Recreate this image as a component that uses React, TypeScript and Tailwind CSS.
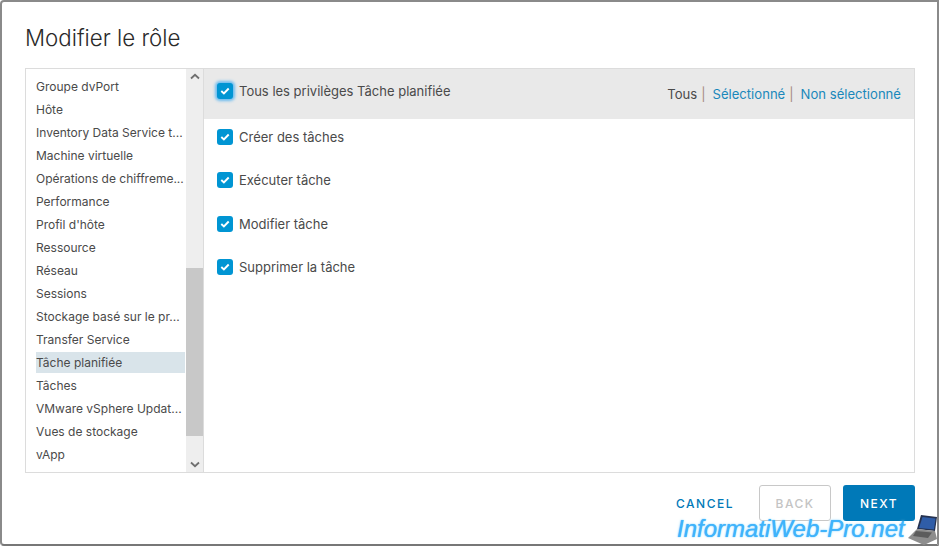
import React from "react";

const items = ["Groupe dvPort","Hôte","Inventory Data Service t...","Machine virtuelle","Opérations de chiffreme...","Performance","Profil d'hôte","Ressource","Réseau","Sessions","Stockage basé sur le pr...","Transfer Service","Tâche planifiée","Tâches","VMware vSphere Updat...","Vues de stockage","vApp"];

function Check({ glow }: { glow?: boolean }) {
  return (
    <span className={"flex h-4 w-4 shrink-0 items-center justify-center rounded-[3px] bg-[#0095d3] " + (glow ? "shadow-[0_0_3px_2px_#6bbcf0]" : "")}>
      <svg width="10" height="8" viewBox="0 0 10 8" fill="none"><path d="M1.3 4 L3.9 6.4 L8.7 1.5" stroke="#fff" strokeWidth="1.9" /></svg>
    </span>
  );
}

const perms = ["Créer des tâches","Exécuter tâche","Modifier tâche","Supprimer la tâche"];

export default function App() {
  return (
    <div className="relative h-[546px] w-[940px] overflow-hidden bg-white font-['Inter','Liberation_Sans',sans-serif] text-[#4a4a4a]">
      <div className="flex h-[546px] w-[939px] flex-col rounded-tl-[4px] rounded-bl-[4px] border-2 border-t-[#8a8a8a] border-r-[#8a8a8a] border-b-[#777] border-l-[#8a8a8a] pt-[22px] pr-[22px] pb-[22px] pl-[23px]">
        <h1 className="h-[44px] text-[22.3px] leading-[28px] font-light text-[#2a2a2a]">Modifier le rôle</h1>
        <div className="flex h-[405px] border border-[#dcdcdc]">
          <div className="flex w-[160px] shrink-0 flex-col pt-[6px] pl-[10px]">
            {items.map((t) => (
              t === "Tâche planifiée"
                ? <div key={t} className="mt-px mr-px mb-px h-[21px] whitespace-nowrap bg-[#d9e4ea] text-[12px] leading-[21px]">{t}</div>
                : <div key={t} className="h-[23px] whitespace-nowrap text-[12px] leading-[23px]">{t}</div>
            ))}
          </div>
          <div className="flex w-[17px] shrink-0 flex-col bg-[#eeeeee]">
            <div className="flex h-[199px] items-start justify-center pt-[4px]">
              <svg width="10" height="7" viewBox="0 0 10 7" fill="none"><path d="M1 5.5 L5 1.8 L9 5.5" stroke="#6f6f6f" strokeWidth="1.8" /></svg>
            </div>
            <div className="h-[168px] bg-[#c8c8c8]" />
            <div className="flex flex-1 items-end justify-center pb-[4px]">
              <svg width="10" height="7" viewBox="0 0 10 7" fill="none"><path d="M1 1.5 L5 5.2 L9 1.5" stroke="#6f6f6f" strokeWidth="1.8" /></svg>
            </div>
          </div>
          <div className="flex min-w-0 flex-1 flex-col border-l border-[#dcdcdc]">
            <div className="flex h-[50px] items-start justify-between bg-[#e9e9e9] pr-[13px] pl-[13px]">
              <div className="flex items-center gap-[6px] pt-[14px]">
                <Check glow />
                <span className="text-[13px] leading-[16px]">Tous les privilèges Tâche planifiée</span>
              </div>
              <div className="flex pt-[17px] text-[13.1px] leading-[16px]">
                <span>Tous</span><span className="mr-[7px] ml-[4px] text-[#a58a7c]">|</span>
                <span className="text-[#1a88bb]">Sélectionné</span><span className="mr-[7px] ml-[4px] text-[#a58a7c]">|</span>
                <span className="text-[#1a88bb]">Non sélectionné</span>
              </div>
            </div>
            <div className="flex flex-col gap-[27.4px] pt-[10px] pl-[13px]">
              {perms.map((p) => (
                <div key={p} className="flex h-4 items-center gap-[6px]">
                  <Check />
                  <span className="text-[13px] leading-[16px]">{p}</span>
                </div>
              ))}
            </div>
          </div>
        </div>
        <div className="mt-[12px] flex items-center justify-end">
          <span className="mr-[25px] pt-px text-[12px] font-medium tracking-[1.5px] text-[#0079b8]">CANCEL</span>
          <span className="mr-[12px] flex h-[36px] w-[72px] items-center justify-center rounded-[3px] border border-[#c8c8c8] pt-px text-[12px] font-medium tracking-[1.5px] text-[#c4c4c4]">BACK</span>
          <span className="flex h-[36px] w-[72px] items-center justify-center rounded-[3px] bg-[#0079b8] pt-px text-[12px] font-medium tracking-[1.5px] text-white">NEXT</span>
        </div>
      </div>
      <div className="absolute top-[515px] left-[677px] font-['Liberation_Sans',sans-serif] text-[24px] leading-[27px] text-[#3fb3fb] italic [text-shadow:0_0_1px_#3fb3fb,0_0_3px_#bfe9ff]">InformatiWeb-Pro.net</div>
      <svg className="absolute top-[512px] left-[904px]" width="36" height="34" viewBox="0 0 36 34">
        <path d="M17 3 L33 5 L31 19 L13 17 Z" fill="#26324f" />
        <path d="M18.5 5 L31.5 6.5 L30 17.5 L15 16 Z" fill="#2f5da8" />
        <path d="M13 17 L31 19 L33 27 L20 33 L4 26 Z" fill="#8d8d8d" />
        <path d="M12 19 L28 20.5 L24 26 L9 24 Z" fill="#5c5c5c" />
      </svg>
    </div>
  );
}
